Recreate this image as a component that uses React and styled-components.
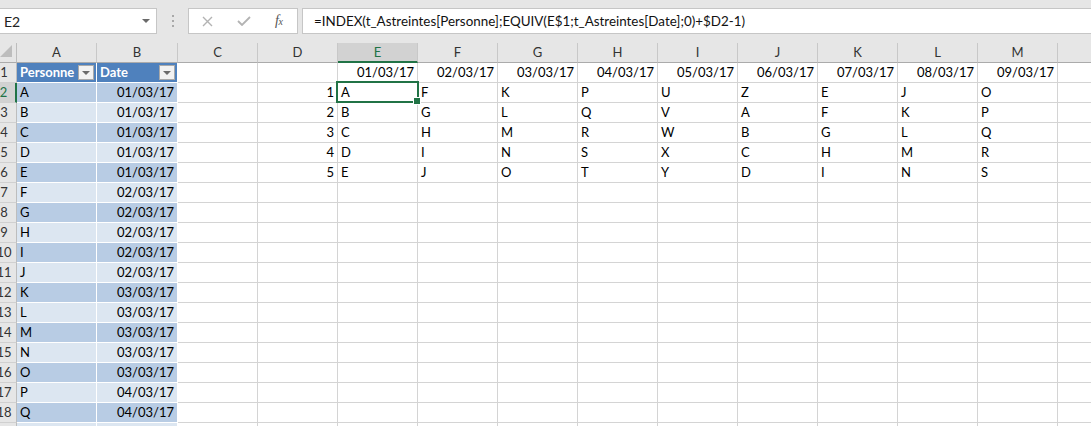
import React from "react";
import styled, { createGlobalStyle, css } from "styled-components";

const GlobalStyle = createGlobalStyle`
  html, body { margin: 0; padding: 0; background: #ffffff; }
  body { font-family: Lato, "Open Sans", sans-serif; overflow: hidden; }
  * { box-sizing: border-box; }
`;

const GREEN = "#217346";
const GRID = "#d4d4d4";

const Viewport = styled.div`
  width: 1091px;
  height: 426px;
  overflow: hidden;
  background: #ffffff;
`;

const Sheet = styled.div`
  width: 1160px;
  margin-left: -8px;
`;

const FormulaBar = styled.div`
  display: flex;
  align-items: flex-start;
  height: 43px;
  padding-top: 8px;
  background: #e6e6e6;
`;

const NameBox = styled.div`
  width: 165px;
  height: 26px;
  background: #ffffff;
  border: 1px solid #c6c6c6;
  display: flex;
  align-items: center;
  justify-content: space-between;
  padding: 0 6px 0 11px;
  font-size: 14px;
  color: #222;
`;

const Caret = styled.span`
  width: 0;
  height: 0;
  border-left: 4px solid transparent;
  border-right: 4px solid transparent;
  border-top: 4px solid #6a6a6a;
`;

const DragHandle = styled.div`
  width: 31px;
  display: flex;
  flex-direction: column;
  align-items: center;
  gap: 3px;
  padding-top: 7px;
`;

const Dot = styled.span`
  width: 2px;
  height: 2px;
  background: #a8a8a8;
`;

const ActionBox = styled.div`
  width: 110px;
  height: 26px;
  background: #ffffff;
  border: 1px solid #c6c6c6;
  display: flex;
  align-items: center;
  padding-left: 13px;
  gap: 24px;
`;

const Fx = styled.span`
  font-family: "Liberation Serif", "DejaVu Serif", serif;
  font-style: italic;
  font-size: 14px;
  color: #555;
  letter-spacing: -0.5px;
  line-height: 1;
  & small { font-size: 10px; }
`;

const FormulaInput = styled.div`
  flex: 1;
  margin-left: 4px;
  height: 26px;
  background: #ffffff;
  border: 1px solid #c6c6c6;
  display: flex;
  align-items: center;
  padding-left: 11px;
  font-size: 13.4px;
  color: #111;
  white-space: nowrap;
`;

const Grid = styled.div`
  display: grid;
  grid-template-columns: 25px 80px 81px repeat(12, 80px);
  grid-auto-rows: 20px;
  font-size: 13px;
  line-height: 19px;
`;

const Corner = styled.div`
  background: #e6e6e6;
  border-right: 1px solid #bdbdbd;
  border-bottom: 1px solid #ababab;
  display: flex;
  justify-content: flex-end;
  align-items: flex-end;
  padding: 0 4px 5px 0;
  &::after {
    content: "";
    width: 0;
    height: 0;
    border-left: 12px solid transparent;
    border-bottom: 12px solid #bdbdbd;
  }
`;

const ColHeader = styled.div`
  background: #e6e6e6;
  border-right: 1px solid #c8c8c8;
  border-bottom: 1px solid #ababab;
  text-align: center;
  color: #333;
  ${(p) =>
    p.$selected &&
    css`
      background: #d2d2d2;
      color: ${GREEN};
      border-bottom: 2px solid ${GREEN};
    `}
`;

const RowHeader = styled.div`
  background: #e6e6e6;
  border-right: 1px solid #bdbdbd;
  border-bottom: 1px solid #d0d0d0;
  text-align: center;
  color: #333;
  ${(p) =>
    p.$selected &&
    css`
      background: #d2d2d2;
      color: ${GREEN};
      border-right: 2px solid ${GREEN};
    `}
`;

const kinds = {
  plain: css`
    border-right: 1px solid ${GRID};
    border-bottom: 1px solid ${GRID};
    color: #000;
  `,
  head: css`
    background: #4f81bd;
    color: #ffffff;
    font-weight: 700;
    border-right: 1px solid #ffffff;
    border-bottom: 1px solid #ffffff;
  `,
  dark: css`
    background: #b8cce4;
    color: #000;
    border-right: 1px solid #ffffff;
    border-bottom: 1px solid #ffffff;
  `,
  light: css`
    background: #dce6f1;
    color: #000;
    border-right: 1px solid #ffffff;
    border-bottom: 1px solid #ffffff;
  `,
};

const Cell = styled.div`
  position: relative;
  display: flex;
  align-items: center;
  justify-content: ${(p) => (p.$align === "right" ? "flex-end" : "space-between")};
  padding: 0 3px;
  white-space: nowrap;
  ${(p) => kinds[p.$kind || "plain"]}
`;

const FilterButton = styled.span`
  width: 16px;
  height: 15px;
  margin-right: -1px;
  background: #f2f2f2;
  border: 1px solid #a9a9a9;
  display: flex;
  align-items: center;
  justify-content: center;
  &::after {
    content: "";
    width: 0;
    height: 0;
    border-left: 4px solid transparent;
    border-right: 4px solid transparent;
    border-top: 4px solid #6b6b6b;
  }
`;

const Selection = styled.span`
  position: absolute;
  left: -2px;
  top: -2px;
  right: -2px;
  bottom: -1px;
  border: 2px solid ${GREEN};
  z-index: 2;
  pointer-events: none;
`;

const FillHandle = styled.span`
  position: absolute;
  right: -4px;
  bottom: -4px;
  width: 6px;
  height: 6px;
  background: ${GREEN};
  border: 1px solid #ffffff;
  box-sizing: content-box;
`;

const COLS = ["A", "B", "C", "D", "E", "F", "G", "H", "I", "J", "K", "L", "M", ""];

const people = "ABCDEFGHIJKLMNOPQR".split("");
const tableRows = people.map((p, i) => ({
  name: p,
  date: `0${Math.floor(i / 5) + 1}/03/17`,
}));

const schedule = [
  ["A", "F", "K", "P", "U", "Z", "E", "J", "O"],
  ["B", "G", "L", "Q", "V", "A", "F", "K", "P"],
  ["C", "H", "M", "R", "W", "B", "G", "L", "Q"],
  ["D", "I", "N", "S", "X", "C", "H", "M", "R"],
  ["E", "J", "O", "T", "Y", "D", "I", "N", "S"],
];

const CrossIcon = () => (
  <svg width="11" height="11" viewBox="0 0 11 11">
    <path d="M1 1 L10 10 M10 1 L1 10" stroke="#b3b3b3" strokeWidth="1.4" fill="none" />
  </svg>
);

const CheckIcon = () => (
  <svg width="14" height="10" viewBox="0 0 14 10">
    <path d="M1 5 L5 9 L13 1" stroke="#b3b3b3" strokeWidth="1.8" fill="none" />
  </svg>
);

function renderRow(r) {
  const cells = [];
  const selRow = r === 2;
  cells.push(
    <RowHeader key="h" $selected={selRow}>
      {r}
    </RowHeader>
  );
  if (r === 1) {
    cells.push(
      <Cell key="A" $kind="head">
        Personne
        <FilterButton />
      </Cell>
    );
    cells.push(
      <Cell key="B" $kind="head">
        Date
        <FilterButton />
      </Cell>
    );
  } else {
    const t = tableRows[r - 2];
    const kind = r % 2 === 0 ? "dark" : "light";
    cells.push(
      <Cell key="A" $kind={kind}>
        {t ? t.name : ""}
      </Cell>
    );
    cells.push(
      <Cell key="B" $kind={kind} $align="right">
        {t ? t.date : ""}
      </Cell>
    );
  }
  cells.push(<Cell key="C" />);
  cells.push(
    <Cell key="D" $align="right">
      {r >= 2 && r <= 6 ? r - 1 : ""}
    </Cell>
  );
  for (let c = 0; c < 9; c++) {
    let content = "";
    let align = "left";
    if (r === 1) {
      content = `0${c + 1}/03/17`;
      align = "right";
    } else if (r >= 2 && r <= 6) {
      content = schedule[r - 2][c];
    }
    const isSel = r === 2 && c === 0;
    cells.push(
      <Cell key={"c" + c} $align={align}>
        {content}
        {isSel && (
          <Selection>
            <FillHandle />
          </Selection>
        )}
      </Cell>
    );
  }
  cells.push(<Cell key="N" />);
  return cells;
}

export default function App() {
  const rows = [];
  for (let r = 1; r <= 19; r++) rows.push(...renderRow(r));
  return (
    <>
      <GlobalStyle />
      <Viewport>
        <Sheet>
          <FormulaBar>
            <NameBox>
              <span>E2</span>
              <Caret />
            </NameBox>
            <DragHandle>
              <Dot />
              <Dot />
              <Dot />
            </DragHandle>
            <ActionBox>
              <CrossIcon />
              <CheckIcon />
              <Fx>
                f<small>x</small>
              </Fx>
            </ActionBox>
            <FormulaInput>
              =INDEX(t_Astreintes[Personne];EQUIV(E$1;t_Astreintes[Date];0)+$D2-1)
            </FormulaInput>
          </FormulaBar>
          <Grid>
            <Corner />
            {COLS.map((c) => (
              <ColHeader key={"h" + c} $selected={c === "E"}>
                {c}
              </ColHeader>
            ))}
            {rows}
          </Grid>
        </Sheet>
      </Viewport>
    </>
  );
}
